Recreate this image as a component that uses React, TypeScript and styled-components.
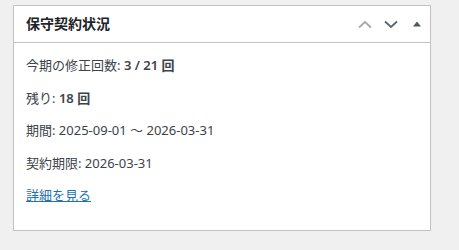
import styled, { createGlobalStyle } from "styled-components";

const GlobalStyle = createGlobalStyle`
  html, body {
    margin: 0;
    padding: 0;
    background: #f0f0f1;
  }
  body {
    font-family: "Noto Sans", "Noto Sans CJK JP", sans-serif;
    color: #3c434a;
  }
`;

const Page = styled.div`
  padding: 5px 28px 0 13px;
  width: 459px;
  box-sizing: border-box;
`;

const Postbox = styled.div`
  background: #fff;
  border: 1px solid #c3c4c7;
  box-shadow: 0 1px 1px rgba(0, 0, 0, 0.04);
`;

const Header = styled.div`
  display: flex;
  align-items: center;
  justify-content: space-between;
  height: 36px;
  border-bottom: 1px solid #c3c4c7;
`;

const Title = styled.h2`
  margin: 0;
  padding: 0 12px;
  font-size: 14px;
  font-weight: 600;
  line-height: 1.4;
  color: #1d2327;
`;

const Actions = styled.div`
  display: flex;
  height: 100%;
`;

const HandleButton = styled.button<{ $tone: string }>`
  width: 26px;
  height: 36px;
  padding: 0;
  border: 0;
  background: none;
  display: flex;
  align-items: center;
  justify-content: center;
  color: ${(p) => p.$tone};
  cursor: pointer;
`;

const Body = styled.div`
  padding: 0 12px 11px;
  font-size: 13px;
`;

const Line = styled.p`
  margin: 13px 0;
  line-height: 19.5px;

  strong {
    font-weight: 600;
  }
`;

const Link = styled.a`
  color: #2271b1;
  text-decoration: underline;
`;

const Chevron = ({ up }: { up?: boolean }) => (
  <svg width="20" height="20" viewBox="0 0 20 20">
    <path
      d={up ? "M4 13.5 L10 8 L16 13.5" : "M4 7.5 L10 13 L16 7.5"}
      fill="none"
      stroke="currentColor"
      strokeWidth="1.8"
    />
  </svg>
);

const Triangle = () => (
  <svg width="20" height="20" viewBox="0 0 20 20">
    <polygon points="6,12.5 10,7.5 14,12.5" fill="currentColor" />
  </svg>
);

export default function App() {
  return (
    <>
      <GlobalStyle />
      <Page>
        <Postbox>
          <Header>
            <Title>保守契約状況</Title>
            <Actions>
              <HandleButton $tone="#a7aaad" aria-label="上へ移動">
                <Chevron up />
              </HandleButton>
              <HandleButton $tone="#5c6670" aria-label="下へ移動">
                <Chevron />
              </HandleButton>
              <HandleButton $tone="#50575e" aria-label="パネルを切り替え">
                <Triangle />
              </HandleButton>
            </Actions>
          </Header>
          <Body>
            <Line>
              今期の修正回数: <strong>3 / 21 回</strong>
            </Line>
            <Line>
              残り: <strong>18 回</strong>
            </Line>
            <Line>期間: 2025-09-01 〜 2026-03-31</Line>
            <Line>契約期限: 2026-03-31</Line>
            <Line>
              <Link href="#">詳細を見る</Link>
            </Line>
          </Body>
        </Postbox>
      </Page>
    </>
  );
}
